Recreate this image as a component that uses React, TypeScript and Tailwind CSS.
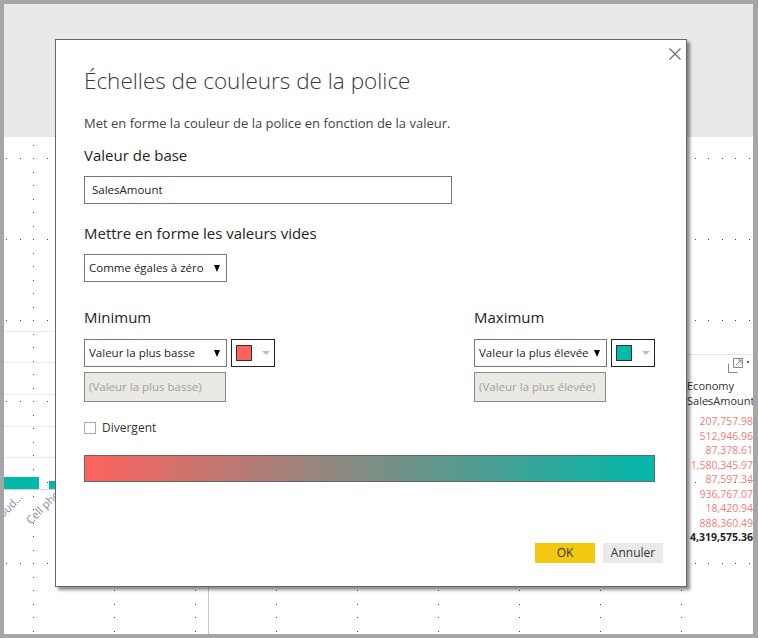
import React from 'react'

const values = ['207,757.98', '512,946.96', '87,378.61', '1,580,345.97', '87,597.34', '936,767.07', '18,420.94', '888,360.49']
const minor = [0, 14, 27, 41, 54, 68]

function GridDots() {
  return (
    <svg width="749" height="497" className="absolute inset-0" shapeRendering="crispEdges">
      <defs>
        <pattern id="dots" x="29" y="21" width="81" height="81" patternUnits="userSpaceOnUse">
          {minor.map((m) => <rect key={'h' + m} x={m} y={0} width={1} height={1} fill="#444" />)}
          {minor.slice(1).map((m) => <rect key={'v' + m} x={0} y={m} width={1} height={1} fill="#444" />)}
        </pattern>
      </defs>
      <rect width="749" height="497" fill="url(#dots)" />
    </svg>
  )
}

function Caret() {
  return <div className="w-0 h-0 border-l-[3.5px] border-r-[3.5px] border-t-[7px] border-l-transparent border-r-transparent border-t-black" />
}

function ColorPick({ color }: { color: string }) {
  return (
    <div className="w-[44px] h-[28px] border border-[#222] flex items-center pl-[4px] gap-[10px]">
      <div className="w-[16px] h-[16px] border border-[#333]" style={{ background: color }} />
      <div className="w-0 h-0 border-l-[4px] border-r-[4px] border-t-[4px] border-l-transparent border-r-transparent border-t-[#bdbdbd]" />
    </div>
  )
}

function Bound({ label, select, disabled, color, selectW, inputW }: { label: string; select: string; disabled: string; color: string; selectW: string; inputW: string }) {
  return (
    <div className="flex flex-col">
      <div className="text-[15px] leading-[22px] text-[#252423]">{label}</div>
      <div className="flex gap-[4px] mt-[11px]">
        <div className={`${selectW} h-[28px] border border-[#777] flex items-center justify-between pl-[4px] pr-[6px] text-[11.5px] text-[#252423] whitespace-nowrap`}>
          <span>{select}</span>
          <Caret />
        </div>
        <ColorPick color={color} />
      </div>
      <div className={`${inputW} h-[30px] mt-[5px] border border-[#888] bg-[#eae9e4] flex items-center pl-[4px] text-[11.5px] text-[#a0a0a0] whitespace-nowrap`}>
        {disabled}
      </div>
    </div>
  )
}

export default function App() {
  return (
    <div className="w-[758px] h-[638px] bg-[#a6a6a6] pl-[4px] pt-[4px] pr-[5px] pb-[4px] font-['Segoe_UI','Open_Sans',sans-serif]">
      <div className="relative w-full h-full bg-white flex flex-col overflow-hidden">
        <div className="h-[133px] bg-[#e9e9e9]" />
        <div className="relative flex-1">
          <GridDots />
          {/* left chart visual */}
          {[194, 225, 257, 289, 320].map((y) => (
            <div key={y} className="absolute left-0 w-[200px] h-px bg-[#ececec]" style={{ top: y }} />
          ))}
          <div className="absolute left-0 top-[340px] w-[35px] h-[12px] bg-[#01b8aa]" />
          <div className="absolute left-[45px] top-[344px] w-[20px] h-[8px] bg-[#01b8aa]" />
          <div className="absolute left-0 top-[352px] w-[200px] h-px bg-[#d6d6d6]" />
          <div className="absolute right-[733px] top-[351px] text-[11px] leading-[14px] text-[#7d8ca6] -rotate-45 origin-right whitespace-nowrap">Cloud...</div>
          <div className="absolute left-[24px] top-[378px] text-[11px] leading-[14px] text-[#7d8ca6] -rotate-45 origin-left whitespace-nowrap">Cell phones</div>
          <div className="absolute left-[204px] top-[150px] bottom-0 w-px bg-[#c8c8c8]" />
          {/* table visual */}
          <div className="absolute left-[682px] right-0 top-[217px] h-px bg-[#e6e6e6]" />
          <svg className="absolute left-[724px] top-[221px]" width="15" height="15" viewBox="0 0 15 15" fill="none" stroke="#888" strokeWidth="1">
            <path d="M0.5 5.5v9h9" />
            <path d="M5.5 0.5h9v9h-9z" />
            <path d="M8 7l5-5M10 2h3v3" />
          </svg>
          <div className="absolute left-[743px] top-[224px] w-[2px] h-[2px] bg-[#666]" />
          <div className="absolute left-[683px] right-0 top-[241px] text-[11px] leading-[15px] text-[#333] whitespace-nowrap overflow-hidden">
            <div>Economy</div>
            <div>SalesAmount</div>
          </div>
          <div className="absolute left-[681px] right-0 top-[277px] text-right text-[10.5px] leading-[14.5px] whitespace-nowrap">
            {values.map((v) => <div key={v} className="text-[#f47b7b]">{v}</div>)}
            <div className="font-bold text-[#252423]">4,319,575.36</div>
          </div>
        </div>

        {/* dialog */}
        <div className="absolute left-[51px] top-[35px] w-[632px] h-[548px] bg-white border border-[#666] shadow-[3px_3px_3px_rgba(0,0,0,0.45)] flex flex-col pl-[28px] pr-[31px] pt-[25px]">
          <button className="absolute right-[5px] top-[8px] w-[12px] h-[12px]">
            <svg width="12" height="12" viewBox="0 0 12 12" stroke="#666" strokeWidth="1.1">
              <path d="M0.5 0.5l11 11M11.5 0.5l-11 11" />
            </svg>
          </button>
          <div className="text-[22.5px] leading-[32px] font-light text-[#3a3a3a]">Échelles de couleurs de la police</div>
          <div className="mt-[17px] text-[13px] leading-[18px] text-[#444]">Met en forme la couleur de la police en fonction de la valeur.</div>
          <div className="mt-[13px] text-[15px] leading-[20px] text-[#252423]">Valeur de base</div>
          <div className="mt-[11px] w-[368px] h-[28px] border border-[#777] flex items-center pl-[7px] text-[11.5px] text-[#252423]">SalesAmount</div>
          <div className="mt-[18px] text-[15px] leading-[22px] text-[#252423]">Mettre en forme les valeurs vides</div>
          <div className="mt-[10px] w-[143px] h-[28px] border border-[#777] flex items-center justify-between pl-[4px] pr-[6px] text-[11.5px] text-[#252423] whitespace-nowrap">
            <span>Comme égales à zéro</span>
            <Caret />
          </div>
          <div className="mt-[24px] flex justify-between">
            <Bound label="Minimum" select="Valeur la plus basse" disabled="(Valeur la plus basse)" color="#fd625e" selectW="w-[143px]" inputW="w-[142px]" />
            <Bound label="Maximum" select="Valeur la plus élevée" disabled="(Valeur la plus élevée)" color="#01b8aa" selectW="w-[133px]" inputW="w-[132px]" />
          </div>
          <div className="mt-[17px] flex items-center gap-[6px] h-[18px]">
            <div className="w-[12px] h-[12px] border border-[#aaa]" />
            <span className="text-[12px] text-[#333]">Divergent</span>
          </div>
          <div className="mt-[18px] h-[27px] border border-[#666] bg-[linear-gradient(to_right,#fd625e,#01b8aa)]" />
          <div className="mt-auto mb-[23px] mr-[-8px] flex justify-end gap-[8px]">
            <button className="w-[60px] h-[20px] bg-[#f2c811] text-[12px] text-[#333]">OK</button>
            <button className="w-[60px] h-[20px] bg-[#eaeaea] text-[12px] text-[#333]">Annuler</button>
          </div>
        </div>
      </div>
    </div>
  )
}
